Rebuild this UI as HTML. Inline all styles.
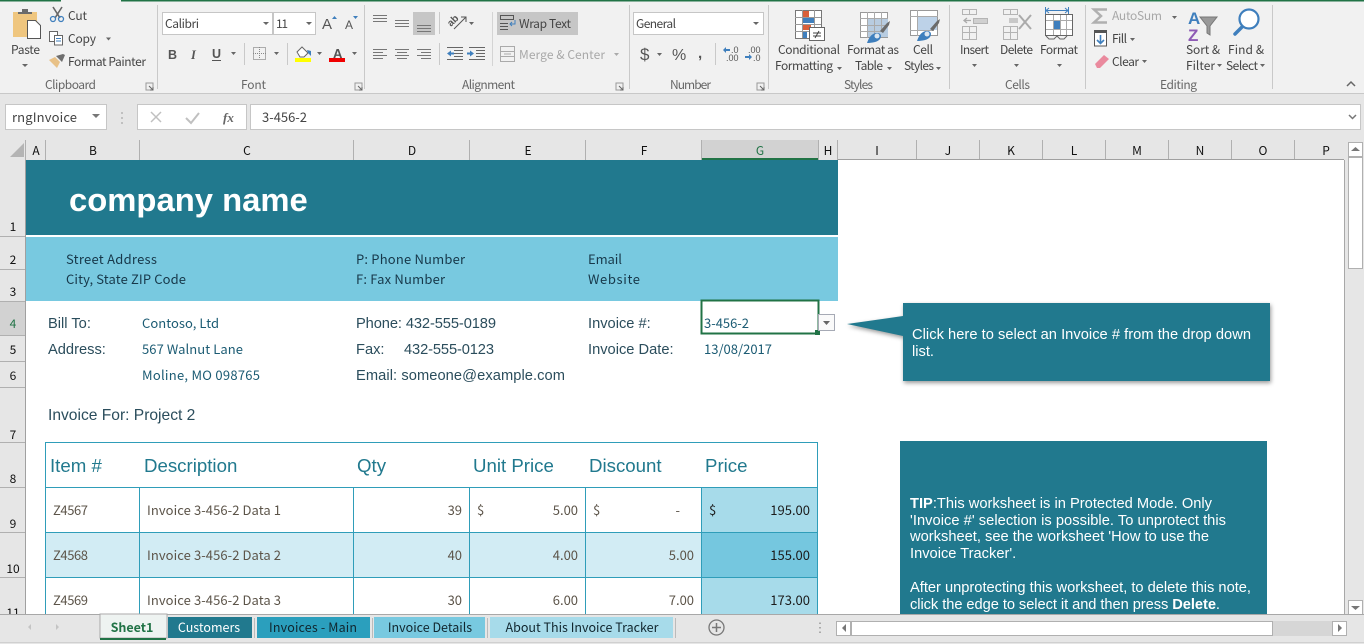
<!DOCTYPE html>
<html><head><meta charset="utf-8"><title>Invoice</title>
<style>
html,body{margin:0;padding:0;width:1364px;height:644px;overflow:hidden;background:#fff}
svg{display:block}
text{white-space:pre}
.r{font:12px "Noto Sans CJK JP","Liberation Sans",sans-serif;fill:#444}
.g{font:12px "Noto Sans CJK JP","Liberation Sans",sans-serif;fill:#666}
.d{fill:#a8a8a8}
.h{font:12px "Noto Sans CJK JP","Liberation Sans",sans-serif;fill:#111;text-anchor:middle}
.c{font:13px "Noto Sans CJK JP","Liberation Sans",sans-serif;fill:#1b5b73}
.l{font:14.67px "Liberation Sans",sans-serif;fill:#2b4d5c}
.t{font:18.67px "Liberation Sans",sans-serif;fill:#21798e}
.b{font:13px "Noto Sans CJK JP","Liberation Sans",sans-serif;fill:#5c5449}
.e{text-anchor:end}
.w{font:14.67px "Liberation Sans",sans-serif;fill:#fff}
.tab{font:12.500px "Noto Sans CJK JP","Liberation Sans",sans-serif;text-anchor:middle}
</style></head><body>
<svg width="1364" height="644" viewBox="0 0 1364 644" xmlns="http://www.w3.org/2000/svg">
<!-- ribbon background -->
<rect width="1364" height="94" fill="#f1f1f1"/>
<rect y="94" width="1364" height="50" fill="#e6e6e6"/>
<rect y="93" width="1364" height="1" fill="#c8c8c8"/>
<rect width="61" height="1.500" fill="#217346"/><rect x="121" width="1243" height="1.500" fill="#217346"/>
<g fill="#c9c9c9"><rect x="157" y="5" width="1" height="84"/><rect x="364" y="5" width="1" height="84"/><rect x="629" y="5" width="1" height="84"/><rect x="768" y="5" width="1" height="84"/><rect x="949" y="5" width="1" height="84"/><rect x="1085" y="5" width="1" height="84"/><rect x="1272" y="5" width="1" height="84"/></g>

<!-- Clipboard -->
<rect x="13" y="12" width="24" height="25" fill="#efc67f"/>
<path d="M18 14v-2h4v-3h6v3h4v2z" fill="#6b6b6b"/>
<path d="M27.500 20.500h8l5 5v13h-13z" fill="#fff" stroke="#555"/>
<text class="r" x="11" y="54" textLength="29">Paste</text>
<path d="M22 64h6l-3 3z" fill="#666"/>
<g fill="none"><path d="M53 7l7 11M62 7l-7 11" stroke="#666" stroke-width="1.600"/><circle cx="53" cy="19" r="2.500" stroke="#3f7fbd" stroke-width="1.300"/><circle cx="61" cy="19" r="2.500" stroke="#3f7fbd" stroke-width="1.300"/></g>
<text class="r" x="68" y="20" textLength="19">Cut</text>
<g fill="#fff" stroke="#666"><rect x="49.500" y="31.500" width="8" height="10"/><rect x="54.500" y="35.500" width="8" height="9.500"/></g><path d="M56 38.500h5M56 41h5" stroke="#3f7fbd"/>
<text class="r" x="68" y="43" textLength="28">Copy</text>
<path d="M106 37.500h5l-2.500 3z" fill="#666"/>
<path d="M49 60l6-3 5 5-3 6z" fill="#e8c187"/><path d="M56 56l7-2 2 1-3 7z" fill="#6e6e6e"/>
<text class="r" x="68" y="66" textLength="78">Format Painter</text>
<text class="g" x="45" y="89" textLength="51">Clipboard</text>
<path d="M146 83h7v7h-7z" fill="none" stroke="#999"/><path d="M149 86l4 4M153 87v3h-3" stroke="#666" fill="none"/>

<!-- Font -->
<rect x="162.500" y="12.500" width="110" height="22" fill="#fff" stroke="#c6c6c6"/>
<rect x="273.500" y="12.500" width="42" height="22" fill="#fff" stroke="#c6c6c6"/>
<text class="r" x="165" y="28" textLength="34">Calibri</text>
<text class="r" x="276" y="28" textLength="12">11</text>
<path d="M263 22h6l-3 3zM306 22h6l-3 3z" fill="#666"/>
<text x="322" y="29" style="font:15px 'Liberation Sans',sans-serif" fill="#555">A</text><path d="M332 19h5l-2.500-3z" fill="#3f7fbd"/>
<text x="345" y="29" style="font:12px 'Liberation Sans',sans-serif" fill="#555">A</text><path d="M353 16h5l-2.500 3z" fill="#3f7fbd"/>
<text x="168" y="59" style="font:bold 12.500px 'Liberation Sans',sans-serif" fill="#555">B</text>
<text x="191" y="59" style="font:italic bold 12.500px 'Liberation Serif',serif" fill="#555">I</text>
<text x="212" y="58" style="font:bold 12.500px 'Liberation Sans',sans-serif" fill="#555">U</text><rect x="212" y="60" width="9" height="1" fill="#555"/>
<path d="M231 52h5l-2.500 3zM274 52h5l-2.500 3zM317 52h5l-2.500 3zM352 52h5l-2.500 3z" fill="#666"/>
<rect x="244" y="43" width="1" height="22" fill="#c9c9c9"/><rect x="287" y="43" width="1" height="22" fill="#c9c9c9"/>
<rect x="253.500" y="47.500" width="12" height="12" fill="none" stroke="#666" stroke-dasharray="1 1"/><path d="M259.500 47v12M253 53.500h13" stroke="#888" stroke-dasharray="1 1"/>
<path d="M297 52l5-5 6 6-4 4h-4z" fill="#fff" stroke="#666"/><path d="M307 50l4 1 0 5-3-3z" fill="#3f7fbd"/>
<rect x="295" y="58" width="16" height="4" fill="#ffff00"/>
<text x="333" y="58" style="font:bold 13px 'Liberation Sans',sans-serif" fill="#555">A</text>
<rect x="329" y="58" width="16" height="4" fill="#f00000"/>
<text class="g" x="241" y="89" textLength="25">Font</text>
<path d="M355 83h7v7h-7z" fill="none" stroke="#999"/><path d="M358 86l4 4M362 87v3h-3" stroke="#666" fill="none"/>

<!-- Alignment -->
<rect x="413" y="12" width="22" height="23" fill="#c6c6c6"/>
<g stroke="#777" fill="none"><path d="M373 15.500h14M373 18.500h14M373 21.500h14"/><path d="M395 20.500h14M395 23.500h14M395 26.500h14"/><path d="M417 25.500h14M417 28.500h14M417 31.500h14"/>
<path d="M373 49.500h14M373 52.500h10M373 55.500h14M373 58.500h10"/><path d="M395 49.500h14M397 52.500h10M395 55.500h14M397 58.500h10"/><path d="M417 49.500h14M421 52.500h10M417 55.500h14M421 58.500h10"/></g>
<text transform="translate(451 27) rotate(-45)" style="font:bold 10px 'Liberation Sans',sans-serif" fill="#555">ab</text>
<path d="M454 29l12-12M466 22v-5h-5" stroke="#555" fill="none"/>
<path d="M469 22h5l-2.500 3z" fill="#666"/>
<rect x="439" y="12" width="1" height="22" fill="#c9c9c9"/><rect x="439" y="43" width="1" height="22" fill="#c9c9c9"/><rect x="492" y="12" width="1" height="54" fill="#d4d4d4"/>
<g stroke="#666" fill="none"><path d="M447 47.500h16M454 50.500h9M454 53.500h9M454 56.500h9M447 59.500h16"/><path d="M469 47.500h16M476 50.500h9M476 53.500h9M476 56.500h9M469 59.500h16"/></g>
<path d="M447 53.500l4-3v2h3v2h-3v2zM474 53.500l-4-3v2h-3v2h3v2z" fill="#3f7fbd"/>
<rect x="497" y="12" width="81" height="23" fill="#c6c6c6"/>
<g stroke="#555" fill="none"><rect x="500.500" y="15.500" width="13" height="4"/><path d="M500 23.500h8M500 26.500h8M500 29.500h8"/></g><path d="M515 20v4h-5M512 22l-2 2 2 2" stroke="#3f7fbd" fill="none"/>
<text class="r" x="519" y="28" textLength="52">Wrap Text</text>
<g stroke="#aaa" fill="none"><rect x="500.500" y="46.500" width="14" height="15"/><path d="M500 51.500h14M500 56.500h14M504 54h7"/></g>
<text class="g d" x="519" y="59" textLength="86">Merge &amp; Center</text>
<path d="M614 53h5l-2.500 3z" fill="#aaa"/>
<text class="g" x="462" y="89" textLength="53">Alignment</text>
<path d="M616 83h7v7h-7z" fill="none" stroke="#999"/><path d="M619 86l4 4M623 87v3h-3" stroke="#666" fill="none"/>

<!-- Number -->
<rect x="633.500" y="12.500" width="130" height="22" fill="#fff" stroke="#c6c6c6"/>
<text class="r" x="636" y="28" textLength="40">General</text>
<path d="M753 22h6l-3 3z" fill="#666"/>
<text x="640" y="60" style="font:17px 'Liberation Sans',sans-serif" fill="#555">$</text>
<path d="M657 53h5l-2.500 3z" fill="#666"/>
<text x="672" y="60" style="font:16px 'Liberation Sans',sans-serif" fill="#555">%</text>
<text x="698" y="58" style="font:bold 15px 'Liberation Sans',sans-serif" fill="#555">,</text>
<rect x="715" y="43" width="1" height="22" fill="#c9c9c9"/>
<text x="731" y="53" style="font:9px 'Liberation Sans',sans-serif" fill="#555">.0</text><text x="726" y="61" style="font:9px 'Liberation Sans',sans-serif" fill="#555">.00</text>
<path d="M723 50l3-3v2h4v2h-4v2z" fill="#3f7fbd"/>
<text x="748" y="53" style="font:9px 'Liberation Sans',sans-serif" fill="#555">.00</text><text x="753" y="61" style="font:9px 'Liberation Sans',sans-serif" fill="#555">.0</text>
<path d="M752 57l-3-3v2h-4v2h4v2z" fill="#3f7fbd"/>
<text class="g" x="670" y="89" textLength="41">Number</text>
<path d="M757 83h7v7h-7z" fill="none" stroke="#999"/><path d="M760 86l4 4M764 87v3h-3" stroke="#666" fill="none"/>

<!-- Styles -->
<g stroke="#777" fill="#fff"><rect x="795.500" y="10.500" width="26" height="28"/></g>
<rect x="803" y="11" width="6" height="6" fill="#d9603a"/><rect x="803" y="17" width="11" height="6" fill="#3f7fbd"/><rect x="803" y="24" width="8" height="6" fill="#d9603a"/><rect x="803" y="31" width="4" height="7" fill="#3f7fbd"/>
<path d="M802.500 10v28M814.500 10v28M795 17.500h26M795 24.500h26M795 31.500h26" stroke="#999" fill="none"/>
<rect x="809.500" y="27.500" width="15" height="13" fill="#fff" stroke="#666"/>
<path d="M813 33h8M813 36h8M819 31l-4 7" stroke="#444" fill="none"/>
<text class="r" x="778" y="54" textLength="62">Conditional</text>
<text class="r" x="775" y="70" textLength="58">Formatting</text><path d="M837 67h5l-2.500 3z" fill="#666"/>
<rect x="860.500" y="12.500" width="27" height="25" fill="#fff" stroke="#999"/><rect x="867" y="19" width="21" height="18" fill="#b8cce0"/>
<path d="M860 18.500h28M860 25.500h28M860 31.500h24M867.500 12v26M874.500 12v26M881.500 12v20" stroke="#aaa" fill="none"/>
<path d="M880 31l7-8 3-2-1 4-6 8z" fill="#6b6b6b"/><path d="M867 43c2-6 5-10 10-10 4 0 5 3 3 6-2 3-8 4-13 4z" fill="#3f7fbd"/><circle cx="877" cy="36" r="2.500" fill="#dce6f0"/>
<text class="r" x="847" y="54" textLength="52">Format as</text>
<text class="r" x="855" y="70" textLength="28">Table</text><path d="M887 67h5l-2.500 3z" fill="#666"/>
<rect x="910.500" y="10.500" width="27" height="25" fill="#fff" stroke="#999"/><rect x="917" y="16" width="20" height="14" fill="#bdd2e8"/>
<path d="M910 16.500h28M910 30.500h24M917.500 10v26" stroke="#aaa" fill="none"/>
<path d="M930 29l7-8 3-2-1 4-6 8z" fill="#6b6b6b"/><path d="M917 41c2-6 5-10 10-10 4 0 5 3 3 6-2 3-8 4-13 4z" fill="#3f7fbd"/><circle cx="927" cy="34" r="2.500" fill="#dce6f0"/>
<text class="r" x="913" y="54" textLength="20">Cell</text>
<text class="r" x="904" y="70" textLength="30">Styles</text><path d="M936 67h5l-2.500 3z" fill="#666"/>
<text class="g" x="844" y="89" textLength="29">Styles</text>

<!-- Cells -->
<g stroke="#b4b4b4" fill="none">
<path d="M962.500 9.500h14v5h-14zM969.500 9v5"/><path d="M973.500 18.500h14v5h-14zM980.500 18v5"/><path d="M962.500 26.500h14v13h-14zM962 32.500h14M969.500 26v13"/>
<path d="M1003.500 9.500h14v5h-14zM1010.500 9v5"/><path d="M1003.500 26.500h14v13h-14zM1003 32.500h14M1010.500 26v13"/></g>
<rect x="974" y="19" width="13" height="4" fill="#d0d0d0"/><rect x="1009" y="18" width="9" height="5" fill="#c8c8c8"/>
<path d="M971 20.500h-7M967 18l-3 2.500 3 2.500" stroke="#aaa" fill="none" stroke-width="1.300"/>
<path d="M1019 15l12 14M1031 15l-12 14" stroke="#aaa" stroke-width="2"/>
<path d="M1046 10.500h22M1049 8l-3 2.500 3 2.500M1065 8l3 2.500-3 2.500M1045.500 7v7M1068.500 7v7" stroke="#3f7fbd" fill="none"/>
<rect x="1045.500" y="14.500" width="27" height="21" fill="#fff" stroke="#666"/><rect x="1053" y="20" width="7" height="9" fill="#3f7fbd"/>
<path d="M1053.500 15v20M1060.500 15v20M1066.500 15v20M1046 20.500h26M1046 29.500h26" stroke="#aaa" fill="none"/>
<path d="M1046 36l3 3h5l3-3 3 3h4l3-3" stroke="#666" fill="none"/>
<text class="r" x="960" y="54" textLength="29">Insert</text>
<text class="r" x="1000" y="54" textLength="33">Delete</text>
<text class="r" x="1040" y="54" textLength="38">Format</text>
<path d="M972 64h5l-2.500 3zM1014 64h5l-2.500 3zM1057 64h5l-2.500 3z" fill="#666"/>
<text class="g" x="1005" y="89" textLength="25">Cells</text>

<!-- Editing -->
<path d="M1107 9.500h-13l7 6.500-7 6.500h13" fill="none" stroke="#b0b0b0" stroke-width="2.500"/>
<text class="g d" x="1112" y="20" textLength="50">AutoSum</text>
<path d="M1172 16h5l-2.500 3z" fill="#666"/>
<rect x="1094.500" y="31" width="12" height="15" fill="#fff" stroke="#555"/><rect x="1094" y="30" width="13" height="3" fill="#555"/>
<path d="M1100.500 35v8M1097 40l3.500 3.500 3.500-3.500" stroke="#3f7fbd" stroke-width="1.600" fill="none"/>
<text class="r" x="1112" y="43" textLength="15">Fill</text><path d="M1130 38h5l-2.500 3z" fill="#666"/>
<path d="M1095 64l9-9 5 4-9 9h-3z" fill="#ea8a9e"/>
<text class="r" x="1112" y="66" textLength="27">Clear</text><path d="M1142 60h5l-2.500 3z" fill="#666"/>
<text x="1188" y="24" style="font:bold 17px 'Liberation Sans',sans-serif" fill="#3f7fbd">A</text>
<text x="1188" y="41" style="font:bold 17px 'Liberation Sans',sans-serif" fill="#8e5bb5">Z</text>
<path d="M1200 17h17l-7 9v9l-3-2v-7z" fill="#999" stroke="#777"/>
<circle cx="1249" cy="19" r="9.500" fill="#fff" stroke="#3f7fbd" stroke-width="2.200"/><path d="M1242 27l-7 7" stroke="#3f7fbd" stroke-width="3.500" stroke-linecap="round"/>
<text class="r" x="1186" y="54" textLength="34">Sort &amp;</text>
<text class="r" x="1186" y="70" textLength="29">Filter</text><path d="M1217 64h5l-2.500 3z" fill="#666"/>
<text class="r" x="1228" y="54" textLength="36">Find &amp;</text>
<text class="r" x="1226" y="70" textLength="32">Select</text><path d="M1260 64h5l-2.500 3z" fill="#666"/>
<text class="g" x="1160" y="89" textLength="37">Editing</text>
<path d="M1347 86l4-4 4 4" stroke="#666" stroke-width="1.500" fill="none"/>

<!-- Formula bar -->
<rect x="5.500" y="104.500" width="101" height="25" fill="#fff" stroke="#c6c6c6"/>
<text class="r" x="12" y="122" style="font-size:13px" textLength="65">rngInvoice</text>
<path d="M92 114h8l-4 4z" fill="#777"/>
<path d="M122 112v2M122 117v2M122 122v2" stroke="#999"/>
<rect x="137.500" y="104.500" width="109" height="25" fill="#fff" stroke="#c6c6c6"/>
<rect x="250.500" y="104.500" width="1110" height="25" fill="#fff" stroke="#c6c6c6"/>
<path d="M151 112l10 10M161 112l-10 10" stroke="#c0c0c0" stroke-width="1.500"/>
<path d="M186 118l5 5 8-10" stroke="#c0c0c0" stroke-width="2" fill="none"/>
<text x="223" y="122" style="font:italic bold 13px 'Liberation Serif',serif" fill="#666">fx</text>
<text class="r" x="262" y="122" style="font-size:13px" textLength="45">3-456-2</text>
<path d="M1349 115l3.500 3.500 3.500-3.500" stroke="#777" stroke-width="1.500" fill="none"/>

<!-- Column headers -->
<rect y="140" width="1346" height="20" fill="#e6e6e6"/>
<path d="M10 157h14v-14z" fill="#b4b4b4"/>
<rect x="702" y="140" width="116" height="18" fill="#d2d2d2"/><rect x="702" y="158" width="116" height="2" fill="#217346"/>
<g fill="#b0b0b0"><rect x="25" y="140" width="1" height="20"/><rect x="45" y="140" width="1" height="20"/><rect x="139" y="140" width="1" height="20"/><rect x="353" y="140" width="1" height="20"/><rect x="469" y="140" width="1" height="20"/><rect x="585" y="140" width="1" height="20"/><rect x="701" y="140" width="1" height="20"/><rect x="818" y="140" width="1" height="20"/><rect x="837" y="140" width="1" height="20"/><rect x="916" y="140" width="1" height="20"/><rect x="979" y="140" width="1" height="20"/><rect x="1042" y="140" width="1" height="20"/><rect x="1105" y="140" width="1" height="20"/><rect x="1168" y="140" width="1" height="20"/><rect x="1231" y="140" width="1" height="20"/><rect x="1294" y="140" width="1" height="20"/></g>
<rect x="838" y="159" width="506" height="1" fill="#a0a0a0"/>
<text class="h" x="36" y="155">A</text><text class="h" x="93" y="155">B</text><text class="h" x="247" y="155">C</text><text class="h" x="412" y="155">D</text><text class="h" x="528" y="155">E</text><text class="h" x="644" y="155">F</text><text class="h" x="760" y="155" style="fill:#217346">G</text><text class="h" x="828" y="155">H</text><text class="h" x="877" y="155">I</text><text class="h" x="948" y="155">J</text><text class="h" x="1011" y="155">K</text><text class="h" x="1074" y="155">L</text><text class="h" x="1137" y="155">M</text><text class="h" x="1200" y="155">N</text><text class="h" x="1263" y="155">O</text><text class="h" x="1326" y="155">P</text>

<!-- Row headers -->
<rect y="160" width="25" height="455" fill="#e6e6e6"/><rect x="25" y="160" width="1" height="455" fill="#a0a0a0"/>
<g fill="#b0b0b0"><rect y="236" width="25" height="1"/><rect y="269" width="25" height="1"/><rect y="301" width="25" height="1"/><rect y="335" width="25" height="1"/><rect y="361" width="25" height="1"/><rect y="387" width="25" height="1"/><rect y="442" width="25" height="1"/><rect y="487" width="25" height="1"/><rect y="532" width="25" height="1"/><rect y="577" width="25" height="1"/></g>
<rect y="302" width="25" height="33" fill="#d2d2d2"/>
<text class="h" x="13" y="231">1</text><text class="h" x="13" y="264">2</text><text class="h" x="13" y="296">3</text><text class="h" x="13" y="328" style="fill:#217346">4</text><text class="h" x="13" y="354">5</text><text class="h" x="13" y="380">6</text><text class="h" x="13" y="439">7</text><text class="h" x="13" y="483">8</text><text class="h" x="13" y="528">9</text><text class="h" x="13" y="573">10</text><text class="h" x="13" y="617">11</text>

<!-- Sheet -->
<rect x="1344" y="160" width="1" height="455" fill="#a8a8a8"/>
<rect x="26" y="160" width="812" height="75" fill="#21798e"/>
<rect x="26" y="237" width="812" height="64" fill="#78c9e0"/>
<text x="69" y="211" style="font:bold 32.800px 'Liberation Sans',sans-serif" fill="#fff">company name</text>
<g style="font:13px 'Noto Sans CJK JP','Liberation Sans',sans-serif" fill="#17384a">
<text x="66" y="264" textLength="91">Street Address</text><text x="66" y="284" textLength="120">City, State ZIP Code</text>
<text x="356" y="264" textLength="109">P: Phone Number</text><text x="356" y="284" textLength="89">F: Fax Number</text>
<text x="588" y="264" textLength="34">Email</text><text x="588" y="284" textLength="52">Website</text></g>

<text class="l" x="48" y="328">Bill To:</text><text class="l" x="48" y="354">Address:</text>
<text class="c" x="142" y="328" textLength="77">Contoso, Ltd</text>
<text class="c" x="142" y="354" textLength="101">567 Walnut Lane</text>
<text class="c" x="142" y="380" textLength="118">Moline, MO 098765</text>
<text class="l" x="356" y="328" textLength="140">Phone: 432-555-0189</text>
<text class="l" x="356" y="354">Fax:</text><text class="l" x="404" y="354" textLength="90">432-555-0123</text>
<text class="l" x="356" y="380" textLength="209">Email: someone@example.com</text>
<text class="l" x="588" y="328">Invoice #:</text><text class="l" x="588" y="354">Invoice Date:</text>
<text class="c" x="704" y="328" textLength="45">3-456-2</text>
<text class="c" x="704" y="354" textLength="68">13/08/2017</text>
<text class="l" x="48" y="420" style="font-size:15.600px">Invoice For: Project 2</text>

<!-- Selected cell -->
<rect x="701.500" y="300.500" width="117" height="33" fill="none" stroke="#217346" stroke-width="2"/>
<rect x="815" y="330" width="5" height="5" fill="#217346"/>
<rect x="818.500" y="314.500" width="16" height="16" fill="#fafafa" stroke="#a6aab5"/>
<path d="M823 321h7l-3.500 4z" fill="#666"/>

<!-- Table -->
<rect x="46" y="533" width="656" height="44" fill="#d2ecf4"/>
<rect x="702" y="488" width="116" height="127" fill="#a7dbea"/>
<rect x="702" y="533" width="116" height="44" fill="#75c7df"/>
<g fill="#2f9db9">
<rect x="45" y="442" width="773" height="1"/><rect x="45" y="487" width="773" height="1"/><rect x="45" y="532" width="773" height="1"/><rect x="45" y="577" width="773" height="1"/>
<rect x="45" y="442" width="1" height="173"/><rect x="817" y="442" width="1" height="173"/>
<rect x="139" y="488" width="1" height="127"/><rect x="353" y="488" width="1" height="127"/><rect x="469" y="488" width="1" height="127"/><rect x="585" y="488" width="1" height="127"/><rect x="701" y="488" width="1" height="127"/></g>
<text class="t" x="50" y="472">Item #</text><text class="t" x="144" y="472">Description</text><text class="t" x="357" y="472">Qty</text><text class="t" x="473" y="472">Unit Price</text><text class="t" x="589" y="472">Discount</text><text class="t" x="705" y="472">Price</text>

<text class="b" x="53" y="515" textLength="35">Z4567</text><text class="b" x="147" y="515" textLength="134">Invoice 3-456-2 Data 1</text>
<text class="b e" x="462" y="515">39</text><text class="b" x="477" y="515">$</text><text class="b e" x="578" y="515">5.00</text><text class="b" x="593" y="515">$</text><text class="b e" x="680" y="515">-</text><text class="b" x="709" y="515" style="fill:#1c1c1c">$</text><text class="b e" x="810" y="515" style="fill:#1c1c1c">195.00</text>

<text class="b" x="53" y="560" textLength="35">Z4568</text><text class="b" x="147" y="560" textLength="134">Invoice 3-456-2 Data 2</text>
<text class="b e" x="462" y="560">40</text><text class="b e" x="578" y="560">4.00</text><text class="b e" x="694" y="560">5.00</text><text class="b e" x="810" y="560" style="fill:#1c1c1c">155.00</text>

<text class="b" x="53" y="605" textLength="35">Z4569</text><text class="b" x="147" y="605" textLength="134">Invoice 3-456-2 Data 3</text>
<text class="b e" x="462" y="605">30</text><text class="b e" x="578" y="605">6.00</text><text class="b e" x="694" y="605">7.00</text><text class="b e" x="810" y="605" style="fill:#1c1c1c">173.00</text>

<!-- Callouts -->
<path d="M903 303h367v78h-367v-45l-56-12 56-8z" fill="#21798e" style="filter:drop-shadow(1px 2px 2px rgba(0,0,0,.4))"/>
<text class="w" x="912" y="339" textLength="339">Click here to select an Invoice # from the drop down</text>
<text class="w" x="912" y="356">list.</text>
<rect x="900" y="441" width="367" height="174" fill="#21798e"/>
<text class="w" x="910" y="508" textLength="302"><tspan font-weight="bold">TIP</tspan>:This worksheet is in Protected Mode. Only</text>
<text class="w" x="910" y="525" textLength="316">'Invoice #' selection is possible. To unprotect this</text>
<text class="w" x="910" y="541" textLength="299">worksheet, see the worksheet 'How to use the</text>
<text class="w" x="910" y="558">Invoice Tracker'.</text>
<text class="w" x="910" y="592" textLength="341">After unprotecting this worksheet, to delete this note,</text>
<text class="w" x="910" y="609" textLength="310">click the edge to select it and then press <tspan font-weight="bold">Delete</tspan>.</text>

<!-- Vertical scrollbar -->
<rect x="1345" y="140" width="19" height="475" fill="#e6e6e6"/>
<rect x="1348.500" y="142.500" width="14" height="14" fill="#fff" stroke="#b0b0b0"/><path d="M1351 151h9l-4.500-4z" fill="#777"/>
<rect x="1348.500" y="157.500" width="14" height="111" fill="#fff" stroke="#b0b0b0"/>
<rect x="1348.500" y="600.500" width="14" height="14" fill="#fff" stroke="#b0b0b0"/><path d="M1351 606h9l-4.500 4z" fill="#777"/>

<!-- Tab strip -->
<rect y="615" width="1364" height="29" fill="#e6e6e6"/>
<rect y="614" width="1364" height="1" fill="#a8a8a8"/>
<rect y="642" width="1364" height="1" fill="#d0d0d0"/>
<path d="M31 624l-3 3 3 3zM56 624l3 3-3 3z" fill="#c4c4c4"/>
<rect x="100" y="614" width="67" height="24" fill="#f6f6f6" stroke="#a8a8a8" stroke-width="1"/>
<rect x="101" y="615" width="65" height="22" fill="#eef3f1"/>
<rect x="100" y="638" width="66" height="2" fill="#217346"/>
<text class="tab" x="132" y="632" style="font-weight:bold;fill:#217346">Sheet1</text>
<rect x="168" y="617" width="84" height="21" fill="#21798e"/>
<text class="tab" x="209" y="632" style="fill:#fff">Customers</text>
<rect x="257" y="617" width="113" height="21" fill="#2b9fbd"/>
<text class="tab" x="313" y="632" style="fill:#10262e" textLength="88">Invoices - Main</text>
<rect x="374" y="617" width="111" height="21" fill="#78c9e0"/>
<text class="tab" x="430" y="632" style="fill:#10262e">Invoice Details</text>
<rect x="490" y="617" width="183" height="21" fill="#a7dbea"/>
<text class="tab" x="582" y="632" style="fill:#10262e">About This Invoice Tracker</text>
<g fill="#bbb"><rect x="254" y="618" width="1" height="20"/><rect x="372" y="618" width="1" height="20"/><rect x="487" y="618" width="1" height="20"/><rect x="675" y="618" width="1" height="20"/></g>
<circle cx="716.500" cy="627.500" r="7.500" fill="none" stroke="#777" stroke-width="1.300"/><path d="M716.500 623v9M712 627.500h9" stroke="#777" stroke-width="1.500"/>
<path d="M820 622.500v1.500M820 627v1.500M820 631.500v1.500" stroke="#aaa" stroke-width="2"/>
<rect x="836" y="621" width="511" height="15" fill="#d6d6d6"/>
<rect x="836.500" y="621.500" width="14" height="14" fill="#fff" stroke="#b0b0b0"/><path d="M846 624v8l-4-4z" fill="#777"/>
<rect x="851.500" y="621.500" width="421" height="14" fill="#fff" stroke="#b0b0b0"/>
<rect x="1332.500" y="621.500" width="14" height="14" fill="#fff" stroke="#b0b0b0"/><path d="M1338 624v8l4-4z" fill="#777"/>
</svg>
</body></html>
